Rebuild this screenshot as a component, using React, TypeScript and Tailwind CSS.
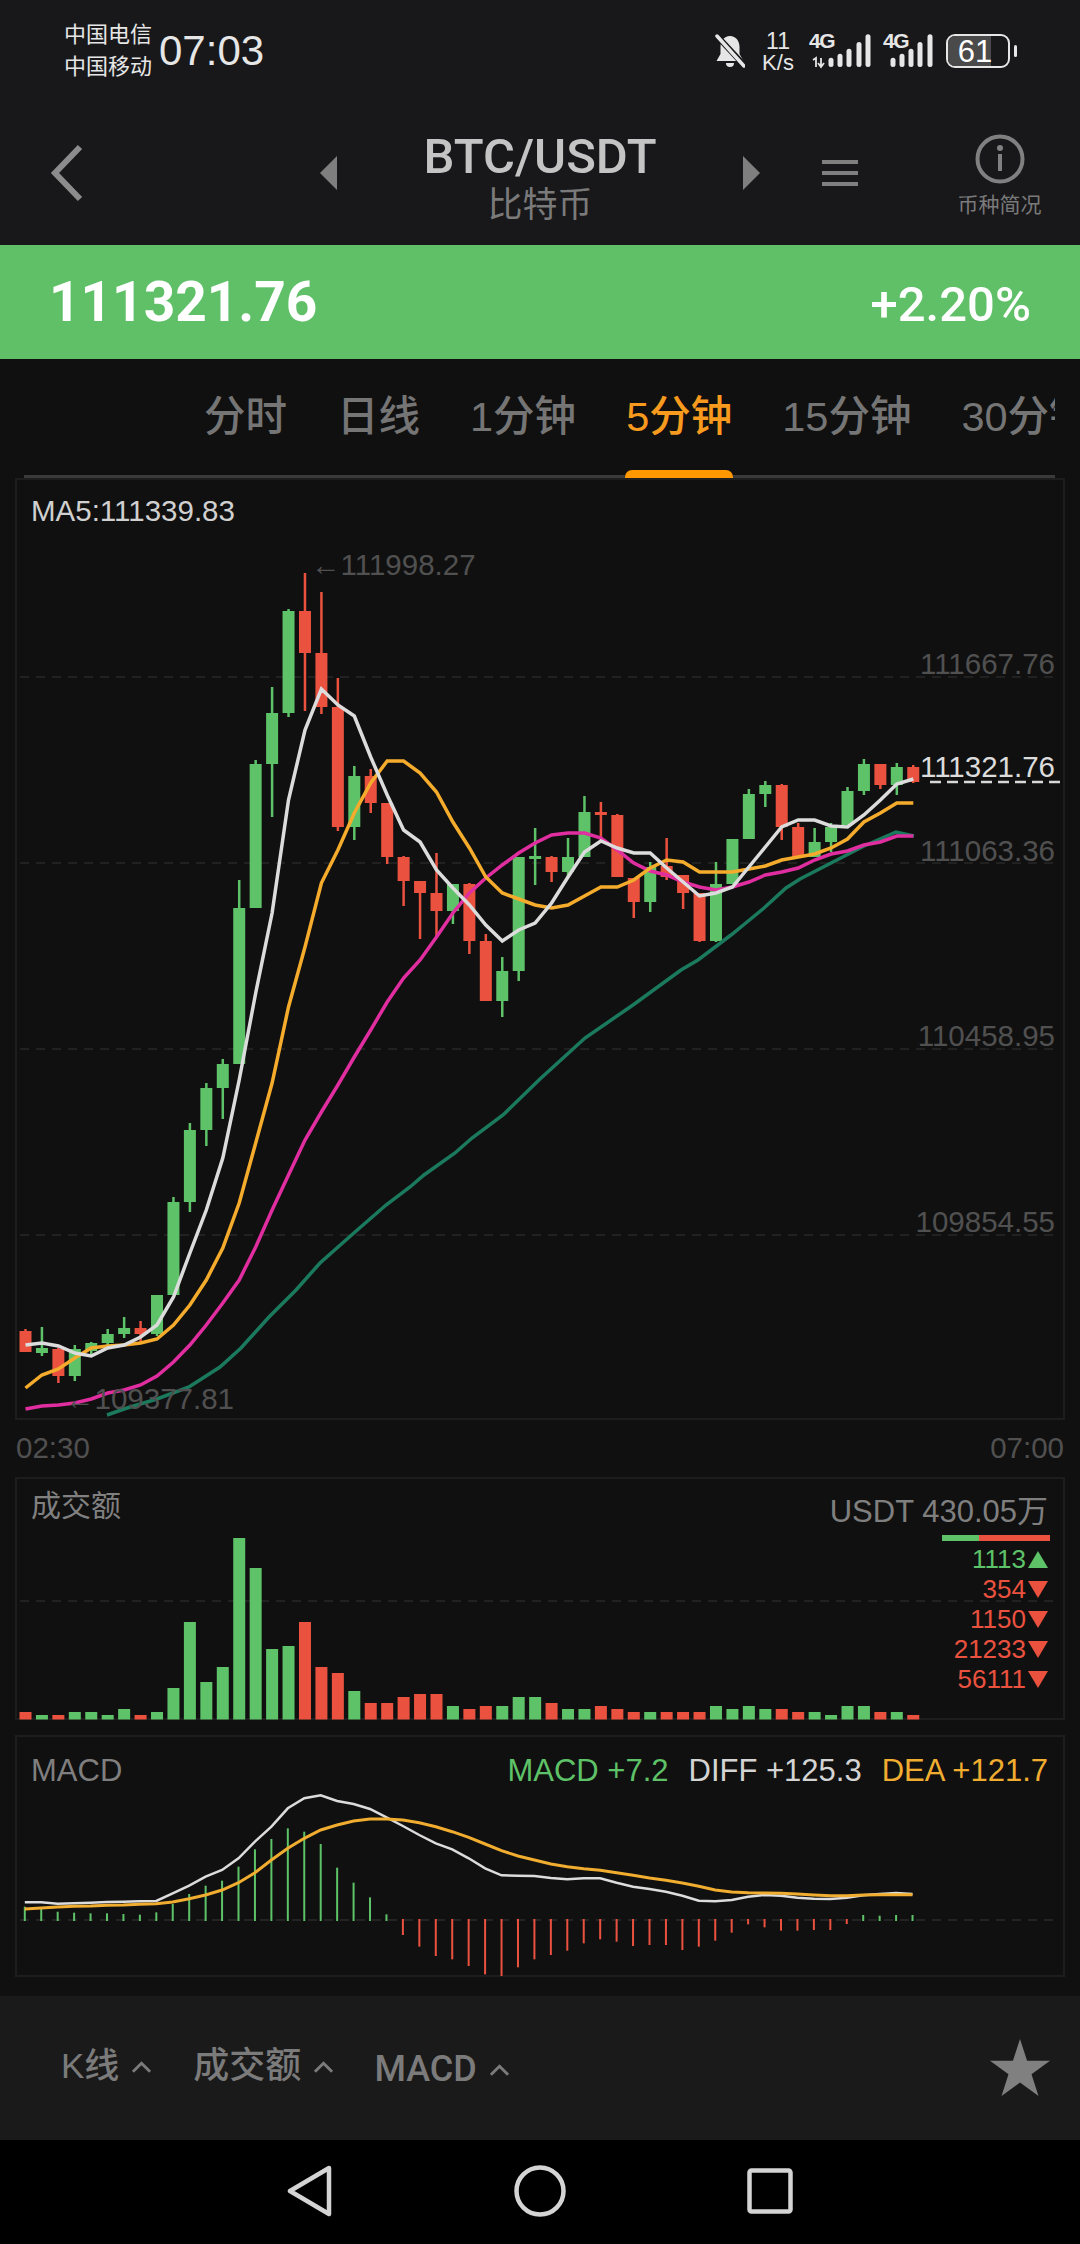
import React from "react";

const G = "#5ec268";
const R = "#ea523f";
const X0 = 25.5;
const DX = 16.44;
const cx = (i: number) => X0 + DX * i;

type C = [string, number, number, number, number];
const candles: C[] = [
  [R, 1331, 1352, 1329, 1352],
  [G, 1348, 1353, 1327, 1356],
  [R, 1349, 1376, 1348, 1383],
  [G, 1349, 1376, 1345, 1381],
  [G, 1343, 1351, 1342, 1355],
  [G, 1334, 1343, 1329, 1346],
  [G, 1328, 1334, 1317, 1338],
  [R, 1328, 1334, 1321, 1342],
  [G, 1295, 1334, 1295, 1336],
  [G, 1202, 1295, 1197, 1295],
  [G, 1130, 1202, 1123, 1212],
  [G, 1088, 1130, 1083, 1146],
  [G, 1064, 1088, 1059, 1119],
  [G, 908, 1064, 880, 1064],
  [G, 764, 908, 760, 908],
  [G, 713, 764, 687, 817],
  [G, 611, 713, 609, 717],
  [R, 611, 653, 573, 711],
  [R, 653, 707, 592, 714],
  [R, 707, 827, 678, 831],
  [G, 776, 827, 766, 840],
  [R, 776, 803, 769, 813],
  [R, 803, 857, 803, 864],
  [R, 857, 881, 856, 906],
  [R, 881, 893, 881, 939],
  [R, 893, 911, 853, 937],
  [G, 884, 911, 884, 924],
  [R, 884, 941, 883, 954],
  [R, 941, 1001, 934, 1001],
  [G, 971, 1001, 957, 1017],
  [G, 857, 971, 857, 981],
  [G, 856, 859, 828, 885],
  [R, 857, 872, 856, 882],
  [G, 857, 872, 838, 877],
  [G, 812, 857, 796, 857],
  [R, 812, 815, 802, 843],
  [R, 815, 877, 814, 877],
  [R, 878, 902, 878, 918],
  [G, 867, 902, 862, 912],
  [R, 866, 877, 838, 880],
  [R, 875, 893, 875, 909],
  [R, 893, 941, 893, 942],
  [G, 884, 941, 862, 942],
  [G, 839, 884, 839, 884],
  [G, 794, 839, 789, 839],
  [G, 785, 794, 781, 807],
  [R, 785, 827, 784, 840],
  [R, 827, 857, 823, 857],
  [G, 842, 857, 828, 857],
  [G, 827, 842, 823, 852],
  [G, 791, 825, 787, 825],
  [G, 764, 791, 759, 795],
  [R, 764, 785, 764, 789],
  [G, 767, 785, 763, 795],
  [R, 767, 782, 765, 783],
];

const ma5 = [1345,1343,1346,1353,1356,1348,1345,1337,1325,1297,1253,1210,1158,1080,993,913,800,730,689,705,716,757,795,830,842,870,888,905,925,941,930,923,903,877,852,841,848,853,853,868,882,896,893,887,867,847,827,820,820,826,827,815,800,784,779];
const ma10 = [1388,1375,1369,1358,1348,1346,1345,1343,1339,1325,1305,1280,1248,1203,1143,1083,1007,947,883,850,813,783,761,761,773,792,822,848,877,893,899,905,908,905,896,887,887,880,868,860,862,872,872,872,869,866,860,857,854,848,839,822,813,803,803];
const ma30 = [1409,1406,1405,1403,1399,1393,1390,1385,1376,1362,1345,1325,1303,1280,1247,1210,1175,1140,1112,1085,1057,1030,1002,978,960,937,913,893,878,865,853,843,835,833,833,838,850,863,871,875,882,887,890,887,882,875,872,868,860,854,851,845,842,836,836];
const maTeal: [number, number][] = [[107,1415],[127,1408],[157,1399],[189,1387],[220,1367],[241,1348],[269,1317],[296,1290],[320,1263],[355,1232],[386,1205],[410,1187],[424,1175],[455,1153],[472,1138],[503,1115],[540,1079],[585,1038],[633,1005],[681,970],[698,960],[731,935],[747,922],[764,908],[786,888],[800,879],[833,862],[864,846],[896,832],[914,836]];

const series = (a: number[]) => a.map((y, i) => `${cx(i).toFixed(1)},${y}`).join(" ");

const vol = [726,735,735,726,726,735,717,735,726,654,456,636,591,204,294,537,528,456,591,609,663,699,699,681,672,672,708,717,708,708,681,681,699,717,717,708,717,726,726,726,726,726,708,717,708,717,717,726,726,735,708,708,726,726,735];

const macdTops = [560,565,575,578,580,580,582,584,577,552,522,497,482,440,388,357,325,335,372,443,488,532,583];
const macdBots = [645,680,708,718,738,763,768,742,718,705,692,670,658,665,678,675,675,690,680,662,638,613,622,632,632,630,630,612];
const macdEnd = [585,587,585,585];
const mx = (i: number) => (36 + 23.87 * i) / 1.452;
const my = (z: number) => 1720 + z / 3;
const diff = [547,547,551,550,548,546,545,544,543,520,497,470,450,415,365,320,265,235,226,243,252,267,292,318,345,370,388,415,445,466,467,468,474,478,475,475,488,500,507,515,527,542,544,540,530,525,527,533,536,537,533,526,522,519,522];
const dea = [567,564,561,559,558,556,555,553,551,546,536,525,510,488,458,420,385,355,330,315,303,297,297,300,308,320,335,352,372,392,408,420,432,440,446,451,458,466,474,481,489,499,510,516,518,519,520,522,525,527,527,525,524,524,524];
const mseries = (a: number[]) => a.map((z, i) => `${mx(i).toFixed(1)},${my(z).toFixed(1)}`).join(" ");

function Bell() {
  return (
    <svg viewBox="0 0 30 34" className="h-[34px] w-[30px]">
      <path d="M15 2c-6 0-9.500 5-9.500 11v7L1.500 27h27l-4-7v-7C24.500 7 21 2 15 2z" fill="#e6e6e6" />
      <path d="M11 29a4 4 0 0 0 8 0z" fill="#e6e6e6" />
      <line x1="1" y1="1" x2="29" y2="31" stroke="#18181a" strokeWidth="6" />
      <line x1="2" y1="2" x2="29" y2="32" stroke="#e6e6e6" strokeWidth="3.500" strokeLinecap="round" />
    </svg>
  );
}

function Signal({ first }: { first?: boolean }) {
  const bars: [number, number][] = first
    ? [[19.5, 28], [28.5, 40], [37.5, 55], [47.5, 75], [56.5, 98]]
    : [[7.5, 28], [16.5, 40], [25.5, 55], [34.5, 75], [44.5, 98]];
  return (
    <div className={first ? "relative h-[36px] w-[62px]" : "relative h-[36px] w-[52px]"}>
      <span className="absolute left-0 top-[-2px] text-[21px] font-bold leading-[20px] tracking-[-1.5px] text-[#e6e6e6]">4G</span>
      <svg viewBox="0 0 62 36" className="absolute left-0 top-0 h-[36px] w-[62px]">
        {bars.map(([x, h], i) => (
          <rect key={i} x={x} y={34 - h / 3} width="5" height={h / 3} rx="2.500" fill="#e6e6e6" />
        ))}
        {first && <path d="M4 27l3-2v9M12 25v8m-3-3l3 4 3-4" stroke="#e6e6e6" strokeWidth="1.800" fill="none" />}
      </svg>
    </div>
  );
}

function StatusBar() {
  return (
    <div className="flex h-[96px] items-center pl-[64px] pr-[63px] pt-[6px] text-[#e6e6e6]">
      <div className="flex w-[95px] flex-col text-[22px] leading-[32px]">
        <span>中国电信</span>
        <span>中国移动</span>
      </div>
      <span className="text-[42px] leading-none">07:03</span>
      <div className="ml-auto flex items-center">
        <Bell />
        <div className="ml-[17px] flex w-[32px] flex-col items-center">
          <span className="text-[23px] leading-[20px]">11</span>
          <span className="mt-[3px] text-[22px] leading-[18px]">K/s</span>
        </div>
        <div className="ml-[15px]"><Signal first /></div>
        <div className="ml-[12px]"><Signal /></div>
        <div className="relative ml-[11px] h-[34px] w-[64px] overflow-hidden rounded-[9px] border-2 border-[#e6e6e6]">
          <div className="absolute inset-y-0 left-0 w-[43px] bg-[#4a4a4a]" />
          <span className="absolute inset-0 flex items-center justify-center pr-[6px] text-[31px] leading-none text-white">61</span>
        </div>
        <div className="ml-[4px] h-[12px] w-[3px] rounded-[2px] bg-[#e6e6e6]" />
      </div>
    </div>
  );
}

function Header() {
  return (
    <div className="flex h-[149px] items-center pl-[50px] pt-[5px]">
      <svg viewBox="0 0 33 58" className="h-[58px] w-[33px]">
        <polyline points="30,3 5,29 30,55" fill="none" stroke="#8c8c8c" strokeWidth="6" />
      </svg>
      <svg viewBox="0 0 17 34" className="ml-[237px] h-[34px] w-[17px]">
        <polygon points="17,0 17,34 0,17" fill="#7f7f7f" />
      </svg>
      <div className="flex w-[406px] flex-col items-center pt-[12px]">
        <span className="font-['Roboto','Noto_Sans_CJK_SC',sans-serif] text-[49px] font-medium leading-[52px] text-[#c4c4c4]">BTC/USDT</span>
        <span className="text-[35px] leading-[44px] text-[#7a7a7a]">比特币</span>
      </div>
      <svg viewBox="0 0 17 34" className="h-[34px] w-[17px]">
        <polygon points="0,0 0,34 17,17" fill="#7f7f7f" />
      </svg>
      <div className="ml-[62px] flex h-[26px] w-[36px] flex-col justify-between">
        <div className="h-[4px] bg-[#7f7f7f]" />
        <div className="h-[4px] bg-[#7f7f7f]" />
        <div className="h-[4px] bg-[#7f7f7f]" />
      </div>
      <div className="ml-[99px] flex w-[85px] flex-col items-center pt-[5px]">
        <svg viewBox="0 0 50 50" className="h-[50px] w-[50px]">
          <circle cx="25" cy="25" r="22.500" fill="none" stroke="#808080" strokeWidth="4" />
          <circle cx="25" cy="14" r="3" fill="#808080" />
          <rect x="23" y="20" width="4" height="17" fill="#808080" />
        </svg>
        <span className="mt-[8px] text-[21px] leading-[26px] text-[#7a7a7a]">币种简况</span>
      </div>
    </div>
  );
}

function PriceBar() {
  return (
    <div className="flex h-[114px] items-center justify-between bg-[#60c068] pl-[49px] pr-[49px] font-['Roboto',sans-serif] text-white">
      <span className="text-[55px] font-bold leading-none">111321.76</span>
      <span className="pt-[4px] text-[49px] font-medium leading-none">+2.20%</span>
    </div>
  );
}

function Tabs() {
  const tabs = ["分时", "日线", "1分钟", "5分钟", "15分钟", "30分钟"];
  return (
    <div className="relative ml-[24px] h-[119px] w-[1031px] overflow-hidden">
      <div className="absolute inset-x-0 bottom-0 h-[3px] bg-[#3a3a3a]" />
      <div className="flex h-full gap-[50px] pl-[180px]">
        {tabs.map((t) => (
          <div
            key={t}
            className={
              t === "5分钟"
                ? "relative flex shrink-0 items-center whitespace-nowrap pb-[3px] text-[41.5px] font-medium text-[#f79a1e]"
                : "relative flex shrink-0 items-center whitespace-nowrap pb-[3px] text-[41.5px] font-medium text-[#757575]"
            }
          >
            {t}
            {t === "5分钟" && <div className="absolute inset-x-[-1px] bottom-0 h-[8px] rounded-t-[7px] bg-[#ff9800]" />}
          </div>
        ))}
      </div>
    </div>
  );
}

function MainChart() {
  const label = "absolute text-[29.5px] leading-[28px]";
  return (
    <div className="relative ml-[15px] h-[942px] w-[1050px] shadow-[inset_0_0_0_2px_#1d1d1d]">
      <svg viewBox="15 478 1050 942" className="absolute inset-0 h-[942px] w-[1050px]">
        {[677, 863, 1049, 1235].map((y) => (
          <line key={y} x1="20" x2="1060" y1={y} y2={y} stroke="#272727" strokeWidth="1.500" strokeDasharray="9 7" />
        ))}
        {candles.map(([c, t, b, wt, wb], i) => (
          <g key={i} fill={c}>
            <rect x={cx(i) - 1.25} y={wt} width="2.500" height={wb - wt} />
            <rect x={cx(i) - 6} y={t} width="12" height={b - t} />
          </g>
        ))}
        <polyline points={maTeal.map((p) => p.join(",")).join(" ")} fill="none" stroke="#1b7a5d" strokeWidth="3.500" />
        <polyline points={series(ma30)} fill="none" stroke="#e02ea0" strokeWidth="3.500" />
        <polyline points={series(ma10)} fill="none" stroke="#f5ac2c" strokeWidth="3.500" />
        <polyline points={series(ma5)} fill="none" stroke="#dcdcdc" strokeWidth="3.500" />
        <line x1="930" x2="1064" y1="782" y2="782" stroke="#d8d8d8" strokeWidth="2.500" strokeDasharray="11 6" />
      </svg>
      <span className={`${label} left-[16px] top-[19px] text-[#d0d0d0]`}>MA5:111339.83</span>
      <span className={`${label} left-[296px] top-[73px] text-[#505050]`}>←111998.27</span>
      <span className={`${label} right-[10px] top-[172px] text-[#505050]`}>111667.76</span>
      <span className={`${label} right-[10px] top-[275px] text-[#dcdcdc]`}>111321.76</span>
      <span className={`${label} right-[10px] top-[359px] text-[#505050]`}>111063.36</span>
      <span className={`${label} right-[10px] top-[544px] text-[#505050]`}>110458.95</span>
      <span className={`${label} right-[10px] top-[730px] text-[#505050]`}>109854.55</span>
      <span className={`${label} left-[50px] top-[907px] text-[#505050]`}>←109377.81</span>
    </div>
  );
}

function Tri({ up }: { up?: boolean }) {
  return (
    <svg viewBox="0 0 20 17" className="ml-[2px] h-[17px] w-[20px]">
      <polygon points={up ? "10,0 20,17 0,17" : "0,0 20,0 10,17"} fill={up ? G : R} />
    </svg>
  );
}

function VolumePanel() {
  const rows: [string, boolean][] = [["1113", true], ["354", false], ["1150", false], ["21233", false], ["56111", false]];
  return (
    <div className="relative ml-[15px] h-[243px] w-[1050px] shadow-[inset_0_0_0_2px_#1d1d1d]">
      <svg viewBox="15 1477 1050 243" className="absolute inset-0 h-[243px] w-[1050px]">
        <line x1="20" x2="1060" y1="1601" y2="1601" stroke="#272727" strokeWidth="1.500" strokeDasharray="9 7" />
        {vol.map((z, i) => {
          const top = 1470 + z / 3;
          return <rect key={i} x={cx(i) - 6} y={top} width="12" height={1719.5 - top} fill={candles[i][0]} />;
        })}
      </svg>
      <div className="relative flex items-start justify-between pl-[16px] pr-[17px] pt-[14px]">
        <span className="text-[30px] leading-[30px] text-[#808080]">成交额</span>
        <div className="flex flex-col items-end">
          <span className="pt-[6px] text-[31px] leading-[30px] text-[#7f7f7f]">USDT 430.05万</span>
          <div className="mr-[-2px] mt-[8px] flex h-[6px] w-[108px]">
            <div className="w-[37px] bg-[#5ec268]" />
            <div className="flex-1 bg-[#ea523f]" />
          </div>
          <div className="mt-[3px] flex flex-col items-end">
            {rows.map(([n, up]) => (
              <div key={n} className={up ? "flex h-[30px] items-center text-[26px] text-[#5ec268]" : "flex h-[30px] items-center text-[26px] text-[#ea523f]"}>
                {n}
                <Tri up={up} />
              </div>
            ))}
          </div>
        </div>
      </div>
    </div>
  );
}

function MacdPanel() {
  return (
    <div className="relative ml-[15px] mt-[15px] h-[242px] w-[1050px] shadow-[inset_0_0_0_2px_#1d1d1d]">
      <svg viewBox="15 1735 1050 242" className="absolute inset-0 h-[242px] w-[1050px]">
        <line x1="20" x2="1060" y1="1920" y2="1920" stroke="#2a2a2a" strokeWidth="1.500" strokeDasharray="9 7" />
        {macdTops.map((z, i) => (
          <rect key={i} x={mx(i) - 1} y={my(z)} width="2" height={1921 - my(z)} fill={G} />
        ))}
        {macdBots.map((z, i) => (
          <rect key={i} x={mx(i + 23) - 1} y="1919" width="2" height={my(z) - 1919} fill={R} />
        ))}
        {macdEnd.map((z, i) => (
          <rect key={i} x={mx(i + 51) - 1} y={my(z)} width="2" height={1921 - my(z)} fill={G} />
        ))}
        <polyline points={mseries(diff)} fill="none" stroke="#dcdcdc" strokeWidth="2.500" />
        <polyline points={mseries(dea)} fill="none" stroke="#f0ad30" strokeWidth="3" />
      </svg>
      <div className="relative flex items-center justify-between pl-[16px] pr-[17px] pt-[21px] text-[31px] leading-[30px]">
        <span className="text-[#7f7f7f]">MACD</span>
        <div className="flex gap-[20px]">
          <span className="text-[#5ec268]">MACD +7.2</span>
          <span className="text-[#d4d4d4]">DIFF +125.3</span>
          <span className="text-[#f0ad30]">DEA +121.7</span>
        </div>
      </div>
    </div>
  );
}

function Caret() {
  return (
    <svg viewBox="0 0 22 12" className="ml-[12px] mt-[2px] h-[12px] w-[21px]">
      <polyline points="2,11 11,2 20,11" fill="none" stroke="#7b7b7b" strokeWidth="3" />
    </svg>
  );
}

function Toolbar() {
  return (
    <div className="mt-[19px] flex h-[144px] items-center bg-[#1a1a1a] pl-[61px] pr-[30px] text-[#7b7b7b]">
      <div className="mb-[5px] flex items-center">
        <span className="text-[35px] font-medium leading-none">K线</span>
        <Caret />
      </div>
      <div className="mb-[5px] ml-[41px] flex items-center">
        <span className="text-[36px] font-medium leading-none">成交额</span>
        <Caret />
      </div>
      <div className="ml-[40px] flex items-center pt-[2px]">
        <span className="font-['Roboto',sans-serif] text-[36px] font-medium leading-none">MACD</span>
        <Caret />
      </div>
      <svg viewBox="0 0 60 57" className="mb-[2px] ml-auto h-[57px] w-[60px]">
        <polygon points="30,0 37.100,21.800 60,21.800 41.500,35.200 48.500,57 30,43.500 11.500,57 18.500,35.200 0,21.800 22.900,21.800" fill="#808080" />
      </svg>
    </div>
  );
}

function NavBar() {
  return (
    <div className="flex h-[104px] items-center bg-black pb-[2px] pl-[287px]">
      <svg viewBox="0 0 45 52" className="h-[52px] w-[45px]">
        <path d="M42 3 L3 26 L42 49 Z" fill="none" stroke="#d4d4d4" strokeWidth="4.500" strokeLinejoin="round" />
      </svg>
      <svg viewBox="0 0 52 52" className="ml-[182px] h-[52px] w-[52px]">
        <circle cx="26" cy="26" r="23.500" fill="none" stroke="#d4d4d4" strokeWidth="4.500" />
      </svg>
      <svg viewBox="0 0 46 46" className="ml-[181px] h-[46px] w-[46px]">
        <rect x="2.500" y="2.500" width="41" height="41" rx="2" fill="none" stroke="#d4d4d4" strokeWidth="4.500" />
      </svg>
    </div>
  );
}

export default function App() {
  return (
    <div className="relative flex h-[2244px] w-[1080px] flex-col overflow-hidden bg-[#101010] font-['Liberation_Sans','Noto_Sans_CJK_SC',sans-serif]">
      <div className="bg-[#18181a]">
        <StatusBar />
        <Header />
      </div>
      <PriceBar />
      <Tabs />
      <MainChart />
      <div className="flex h-[57px] items-center justify-between pl-[16px] pr-[16px] text-[29.5px] text-[#505050]">
        <span>02:30</span>
        <span>07:00</span>
      </div>
      <VolumePanel />
      <MacdPanel />
      <Toolbar />
      <NavBar />
    </div>
  );
}
